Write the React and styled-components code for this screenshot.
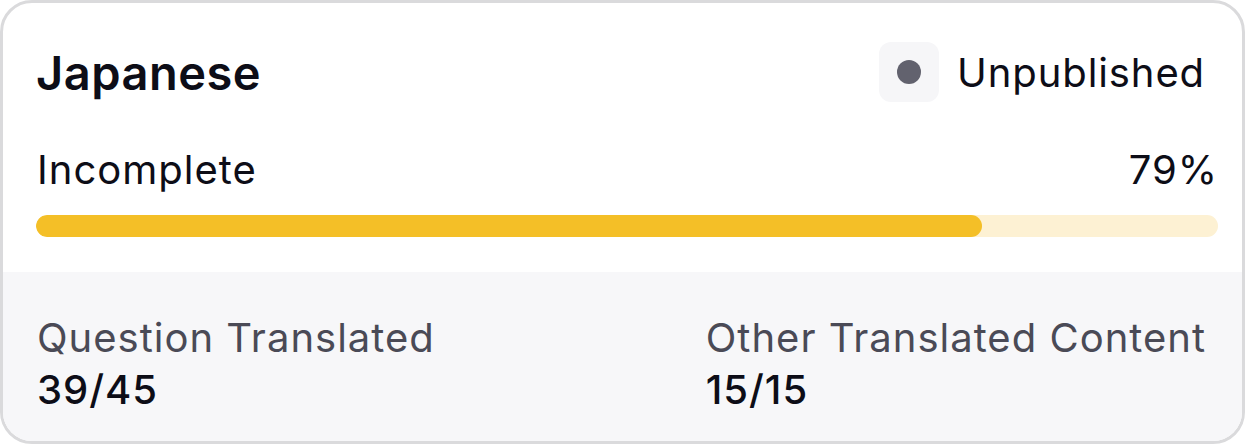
import React from "react";
import styled, { createGlobalStyle } from "styled-components";

const Global = createGlobalStyle`
  html, body { margin: 0; padding: 0; background: #ffffff; }
  body { font-family: Inter, "Noto Sans", sans-serif; }
  * { box-sizing: border-box; }
`;

const Card = styled.div`
  width: 1245px;
  height: 444px;
  border: 3px solid #dadadc;
  border-radius: 32px;
  background: #ffffff;
  overflow: hidden;
  display: flex;
  flex-direction: column;
`;

const Body = styled.div`
  padding: 39px 24px 0 33px;
  height: 269px;
`;

const Header = styled.div`
  display: flex;
  align-items: center;
  justify-content: space-between;
  height: 60px;
  padding-right: 13px;
  padding-left: 0;
`;

const Title = styled.h1`
  margin: 0;
  font-size: 47px;
  font-weight: 600;
  color: #0d0d17;
  letter-spacing: 0.5px;
`;

const Status = styled.div`
  display: flex;
  align-items: center;
  gap: 18px;
`;

const DotBox = styled.div`
  width: 60px;
  height: 60px;
  border-radius: 12px;
  background: #f6f6f8;
  display: flex;
  align-items: center;
  justify-content: center;
`;

const Dot = styled.span`
  width: 24px;
  height: 24px;
  border-radius: 50%;
  background: #62626e;
`;

const StatusText = styled.span`
  font-size: 40px;
  color: #0d0d17;
  letter-spacing: 0.9px;
`;

const ProgressRow = styled.div`
  display: flex;
  justify-content: space-between;
  align-items: baseline;
  margin-top: 44px;
  padding-left: 1px;
  padding-right: 0;
`;

const ProgressLabel = styled.span`
  font-size: 40px;
  font-weight: 400;
  color: #0d0d17;
  line-height: 48px;
  letter-spacing: 1px;
`;

const Track = styled.div`
  margin-top: 21px;
  height: 22px;
  border-radius: 11px;
  background: #fdf1d3;
  overflow: hidden;
`;

const Fill = styled.div`
  height: 100%;
  border-radius: 11px;
  background: #f4bf27;
`;

const Footer = styled.div`
  flex: 1;
  background: #f7f7f9;
  display: flex;
  justify-content: space-between;
  padding: 43px 36px 0 34px;
`;

const Stat = styled.div`
  display: flex;
  flex-direction: column;
`;

const StatLabel = styled.span`
  font-size: 40px;
  color: #4a4a56;
  line-height: 46px;
  letter-spacing: 1px;
`;

const StatValue = styled.span`
  font-size: 40px;
  font-weight: 500;
  color: #0d0d17;
  line-height: 46px;
  margin-top: 6px;
  letter-spacing: 1px;
`;

export default function App() {
  const pct = 80;
  return (
    <>
      <Global />
      <Card>
        <Body>
          <Header>
            <Title>Japanese</Title>
            <Status>
              <DotBox>
                <Dot />
              </DotBox>
              <StatusText>Unpublished</StatusText>
            </Status>
          </Header>
          <ProgressRow>
            <ProgressLabel>Incomplete</ProgressLabel>
            <ProgressLabel>79%</ProgressLabel>
          </ProgressRow>
          <Track>
            <Fill style={{ width: `${pct}%` }} />
          </Track>
        </Body>
        <Footer>
          <Stat>
            <StatLabel>Question Translated</StatLabel>
            <StatValue>39/45</StatValue>
          </Stat>
          <Stat>
            <StatLabel>Other Translated Content</StatLabel>
            <StatValue>15/15</StatValue>
          </Stat>
        </Footer>
      </Card>
    </>
  );
}
